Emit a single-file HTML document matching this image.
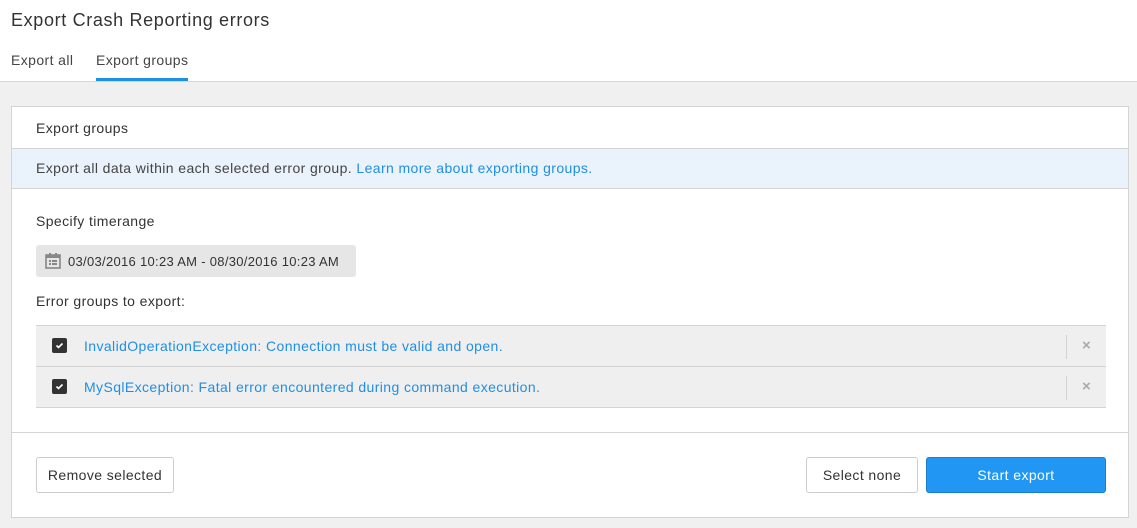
<!DOCTYPE html>
<html><head><style>
*{box-sizing:border-box;margin:0;padding:0}
body{width:1137px;height:528px;background:#f0f0f0;font-family:"Liberation Sans",sans-serif;color:#333;position:relative;overflow:hidden;font-size:14px;letter-spacing:0.4px}
.top{position:absolute;left:0;top:0;width:1137px;height:82px;background:#fff;border-bottom:1px solid #d6d6d6}
.abs{position:absolute;white-space:nowrap}
.panel{position:absolute;left:11px;top:106px;width:1118px;height:412px;background:#fff;border:1px solid #d4d4d4}
a{color:#1f8fe5;text-decoration:none}
.row{position:absolute;left:24px;width:1070px;height:41px;background:#efefef;border-top:1px solid #d4d4d4}
.cb{position:absolute;left:16px;top:12px;width:15px;height:15px;background:#333;border-radius:2px}
.cb svg{position:absolute;left:3px;top:3px}
.btn{position:absolute;top:350px;height:36px;border:1px solid #ccc;border-radius:3px;background:#fff;text-align:center;line-height:34px;font-size:14px}
.x{position:absolute;left:1046px;top:11px;color:#aaa;font-size:15px;font-weight:bold}
</style></head><body>
<div class="top">
<div class="abs" style="left:11px;top:10px;font-size:18px;color:#333;letter-spacing:0.65px">Export Crash Reporting errors</div>
<div class="abs" style="left:11px;top:52px;font-size:14px;color:#444">Export all</div>
<div class="abs" style="left:96px;top:52px;font-size:14px;color:#444">Export groups</div>
<div class="abs" style="left:96px;top:78px;width:92px;height:3px;background:#1f8fe5"></div>
</div>
<div class="panel">
<div class="abs" style="left:24px;top:13px;font-size:14px">Export groups</div>
<div class="abs" style="left:0;top:41px;width:1116px;height:41px;background:#eaf2fc;border-top:1px solid #d4d4d4;border-bottom:1px solid #d4d4d4"></div>
<div class="abs" style="left:24px;top:53px;color:#444">Export all data within each selected error group. <a>Learn more about exporting groups.</a></div>
<div class="abs" style="left:24px;top:106px">Specify timerange</div>
<div class="abs" style="left:24px;top:138px;width:320px;height:32px;background:#e6e6e6;border-radius:3px"></div>
<svg class="abs" style="left:33px;top:146px" width="16" height="16" viewBox="0 0 16 16"><rect x="1" y="2" width="14" height="13" fill="none" stroke="#888" stroke-width="1.6"/><rect x="1" y="2" width="14" height="3" fill="#888"/><rect x="4" y="0" width="2" height="3" fill="#888"/><rect x="10" y="0" width="2" height="3" fill="#888"/><rect x="4" y="7" width="2" height="2" fill="#888"/><rect x="7" y="7" width="5" height="2" fill="#888"/><rect x="4" y="10" width="2" height="2" fill="#888"/><rect x="7" y="10" width="5" height="2" fill="#888"/></svg>
<div class="abs" style="left:56px;top:147px;font-size:13px;letter-spacing:0.3px">03/03/2016 10:23 AM - 08/30/2016 10:23 AM</div>
<div class="abs" style="left:24px;top:186px">Error groups to export:</div>
<div class="row" style="top:218px"><div class="cb"><svg width="9" height="9" viewBox="0 0 9 9"><path d="M1.5 4.5L3.5 6.5L7.5 2.5" stroke="#fff" stroke-width="1.6" fill="none"/></svg></div><div class="abs" style="left:48px;top:12px"><a>InvalidOperationException: Connection must be valid and open.</a></div><div class="abs" style="left:1030px;top:9px;width:1px;height:24px;background:#d4d4d4"></div><div class="x">×</div></div>
<div class="row" style="top:259px;border-bottom:1px solid #d4d4d4;height:42px"><div class="cb"><svg width="9" height="9" viewBox="0 0 9 9"><path d="M1.5 4.5L3.5 6.5L7.5 2.5" stroke="#fff" stroke-width="1.6" fill="none"/></svg></div><div class="abs" style="left:48px;top:12px"><a>MySqlException: Fatal error encountered during command execution.</a></div><div class="abs" style="left:1030px;top:9px;width:1px;height:24px;background:#d4d4d4"></div><div class="x">×</div></div>
<div class="abs" style="left:0;top:325px;width:1116px;height:1px;background:#d4d4d4"></div>
<div class="btn" style="left:24px;width:138px">Remove selected</div>
<div class="btn" style="left:794px;width:112px">Select none</div>
<div class="btn" style="left:914px;width:180px;background:#2196f3;border-color:#1a7fd0;color:#fff">Start export</div>
</div>
</body></html>
